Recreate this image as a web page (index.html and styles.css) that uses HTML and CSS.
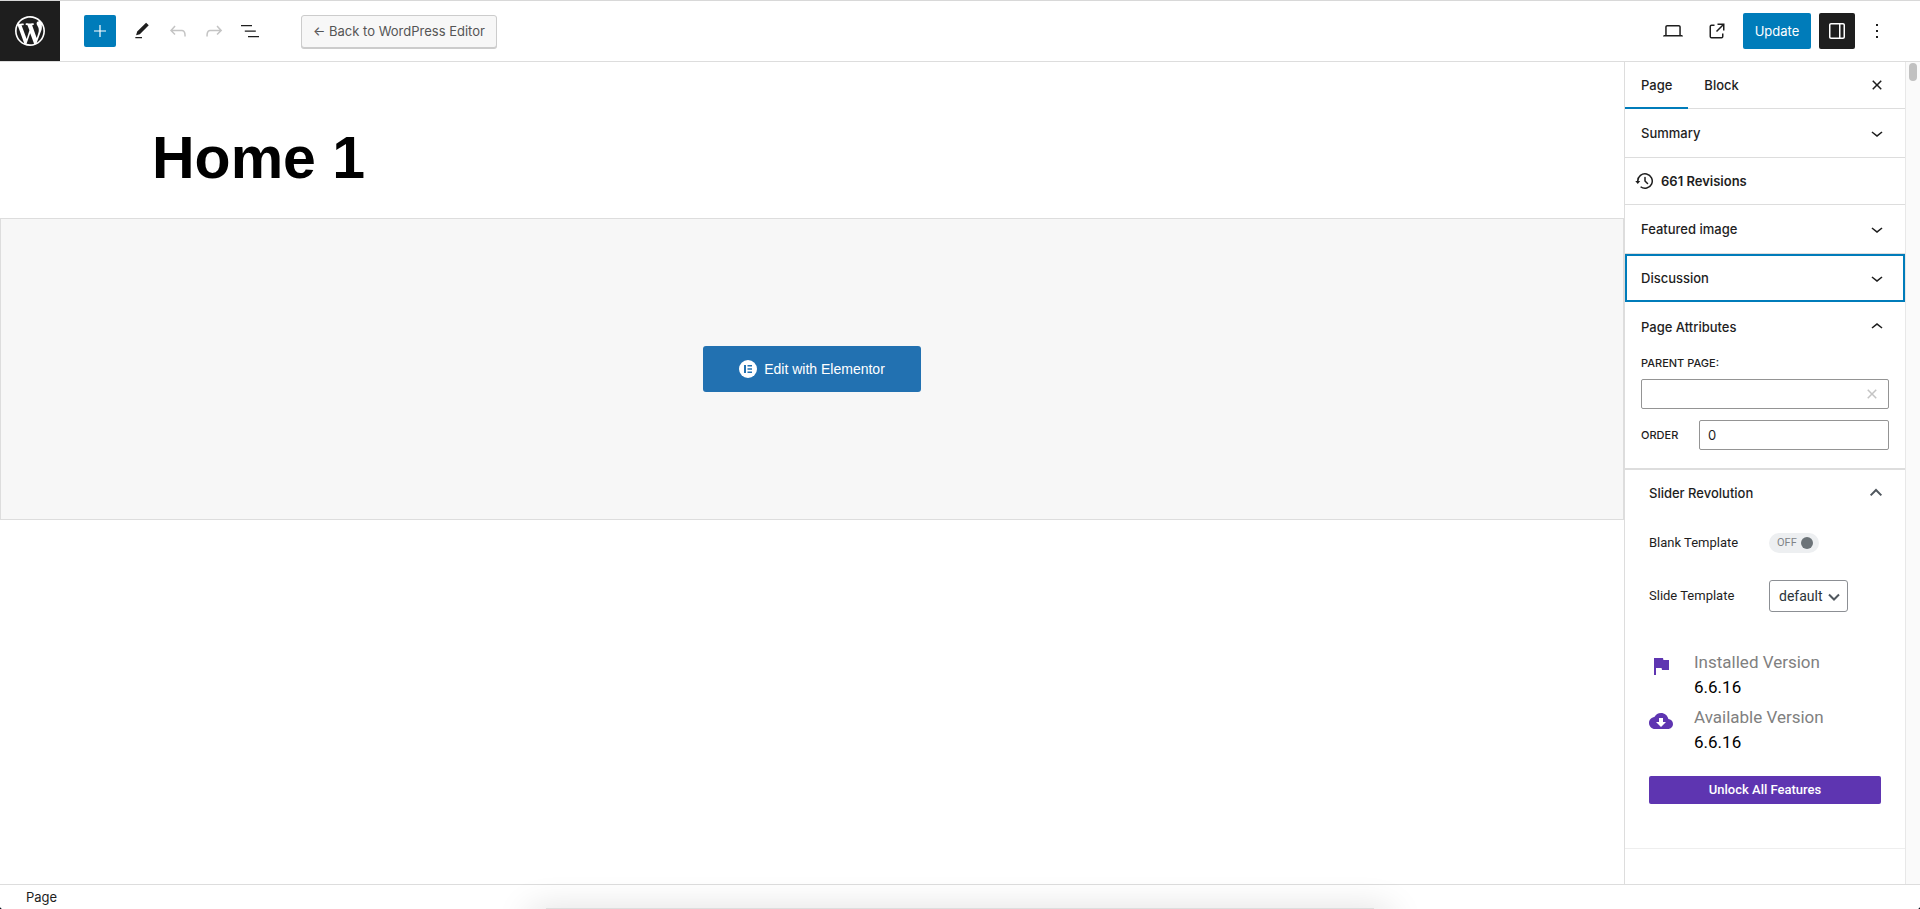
FILE: index.html
```html
<!DOCTYPE html>
<html lang="en">
<head>
<meta charset="utf-8">
<title>Edit Page "Home 1"</title>
<link rel="stylesheet" href="styles.css">
</head>
<body>
<div class="editor">
  <header class="header">
    <a class="wp-link" href="#" aria-label="View Pages"><svg class="wp-logo" viewBox="-2 -2 24 24"><path d="M20 10c0-5.51-4.49-10-10-10C4.48 0 0 4.49 0 10c0 5.52 4.48 10 10 10 5.51 0 10-4.48 10-10zM7.78 15.37L4.37 6.22c.55-.02 1.17-.08 1.17-.08.5-.06.44-1.13-.06-1.11 0 0-1.45.11-2.37.11-.18 0-.37 0-.58-.01C4.12 2.69 6.87 1.11 10 1.11c2.33 0 4.45.87 6.05 2.34-.68-.11-1.65.39-1.65 1.58 0 .74.45 1.36.9 2.1.35.61.55 1.36.55 2.46 0 1.49-1.4 5-1.4 5l-3.03-8.37c.54-.02.82-.17.82-.17.5-.05.44-1.25-.06-1.22 0 0-1.44.12-2.38.12-.87 0-2.33-.12-2.33-.12-.5-.03-.56 1.2-.06 1.22l.92.08 1.26 3.41zM17.41 10c.24-.64.74-1.87.43-4.25.7 1.29 1.05 2.71 1.05 4.25 0 3.29-1.73 6.24-4.4 7.78.97-2.59 1.94-5.2 2.92-7.78zM6.1 18.09C3.12 16.65 1.11 13.53 1.11 10c0-1.3.23-2.48.72-3.59C3.25 10.3 4.67 14.2 6.1 18.09zm4.03-6.63l2.58 6.98c-.86.29-1.76.45-2.71.45-.79 0-1.57-.11-2.29-.33.81-2.38 1.62-4.74 2.42-7.1z"/></svg></a>
    <div class="tools">
      <button class="inserter" aria-label="Toggle block inserter"><svg class="icon" viewBox="0 0 24 24"><path d="M11.4 12.6V18h1.200v-5.400H18v-1.200h-5.400V6h-1.200v5.400H6v1.200z"/></svg></button>
      <button class="tool" aria-label="Tools"><svg class="icon-small" viewBox="0 0 24 24"><path d="M20.1 5.1L16.9 2 6.2 12.7l-1.3 4.4 4.5-1.3L20.1 5.1zM4 20.8h8v-1.5H4v1.5z"/></svg></button>
      <button class="tool" aria-label="Undo" disabled><svg class="icon" viewBox="0 0 24 24"><path d="M18.3 11.7c-.6-.6-1.4-.9-2.3-.9H6.7l2.9-3.3-1.1-1-4.5 5L8.5 16l1-1-2.7-2.7H16c.5 0 .9.2 1.3.5 1 1 1 3.4 1 4.5v.3h1.5v-.2c0-1.5 0-4.3-1.5-5.7z"/></svg></button>
      <button class="tool" aria-label="Redo" disabled><svg class="icon" viewBox="0 0 24 24"><path d="M15.6 6.5l-1.1 1 2.9 3.3H8c-.9 0-1.7.3-2.3.9-1.4 1.5-1.4 4.2-1.4 5.6v.2h1.5v-.3c0-1.1 0-3.5 1-4.5.3-.3.7-.5 1.3-.5h9.2L14.5 15l1.1 1.1 4.6-4.6-4.6-5z"/></svg></button>
      <button class="tool" aria-label="Document overview"><svg class="icon" viewBox="0 0 24 24"><path d="M3 6h11v1.3H3V6Zm3.8 5.5h11v1.3h-11v-1.3ZM21 17H10v1.3h11V17Z"/></svg></button>
    </div>
    <button class="back">← Back to WordPress Editor</button>
    <div class="settings">
      <button class="tool" aria-label="Preview"><svg class="icon" viewBox="0 0 24 24"><path d="M20.5 16h-.7V8c0-1.1-.9-2-2-2H6.2c-1.1 0-2 .9-2 2v8h-.7c-.8 0-1.5.7-1.5 1.5h20c0-.8-.7-1.5-1.5-1.5zM5.7 8c0-.3.2-.5.5-.5h11.6c.3 0 .5.2.5.5v8H5.7V8z"/></svg></button>
      <a class="tool" href="#" aria-label="View Page"><svg class="icon" viewBox="0 0 24 24"><path d="M19.5 4.5h-7V6h4.44l-5.97 5.97 1.06 1.06L18 7.06v4.44h1.5v-7Zm-13 1a2 2 0 0 0-2 2v10a2 2 0 0 0 2 2h10a2 2 0 0 0 2-2v-3H17v3a.5.5 0 0 1-.5.5h-10a.5.5 0 0 1-.5-.5v-10a.5.5 0 0 1 .5-.5h3V5.5h-3Z"/></svg></a>
      <button class="update">Update</button>
      <button class="tool tool-pressed" aria-label="Settings" aria-pressed="true"><svg class="icon" viewBox="0 0 24 24"><path d="M18 4H6c-1.1 0-2 .9-2 2v12c0 1.1.9 2 2 2h12c1.1 0 2-.9 2-2V6c0-1.1-.9-2-2-2zm-4 14.500H6c-.3 0-.5-.2-.5-.5V6c0-.3.2-.5.5-.5h8v13zm4.500-.5c0 .3-.2.5-.5.5h-2.500v-13H18c.3 0 .5.2.5.5v12z"/></svg></button>
      <button class="tool" aria-label="Options"><svg class="icon" viewBox="0 0 24 24"><path d="M13 19h-2v-2h2v2zm0-6h-2v-2h2v2zm0-6h-2V5h2v2z"/></svg></button>
    </div>
  </header>

  <div class="body">
    <main class="canvas">
      <h1 class="title">Home 1</h1>
      <div class="placeholder">
        <button class="elementor"><svg class="elementor-icon" viewBox="0 0 18 18"><circle cx="9" cy="9" r="9" fill="#fff"/><path fill="#2271b1" d="M5 5h2v8H5zM8.500 5H13v1.600H8.500zM8.500 8.200H13v1.600H8.500zM8.500 11.400H13V13H8.500z"/></svg>Edit with Elementor</button>
      </div>
    </main>

    <aside class="sidebar">
      <div class="panels">
        <div class="tabs">
          <button class="tab tab-active">Page</button>
          <button class="tab">Block</button>
          <button class="close" aria-label="Close settings"><svg class="icon" viewBox="0 0 24 24"><path d="M12 13.060l3.712 3.713 1.061-1.060L13.061 12l3.712-3.712-1.060-1.060L12 10.938 8.288 7.227l-1.061 1.060L10.939 12l-3.712 3.712 1.060 1.061L12 13.061z"/></svg></button>
        </div>
        <button class="panel-toggle">Summary<svg class="icon" viewBox="0 0 24 24"><path d="M17.500 11.600L12 16l-5.500-4.400.9-1.200L12 14l4.500-3.600 1 1.200z"/></svg></button>
        <a class="revisions" href="#"><svg class="icon" viewBox="0 0 24 24"><path d="M5.500 12h1.750l-2.500 3-2.500-3H4a8 8 0 113.134 6.350l.907-1.194A6.500 6.500 0 105.500 12zm9.530 1.970l-2.280-2.280V8.500a.75.75 0 00-1.500 0V12a.747.747 0 00.218.529l2.502 2.502a.75.75 0 101.060-1.061z"/></svg>661 Revisions</a>
        <button class="panel-toggle">Featured image<svg class="icon" viewBox="0 0 24 24"><path d="M17.500 11.600L12 16l-5.500-4.400.9-1.200L12 14l4.500-3.600 1 1.200z"/></svg></button>
        <button class="panel-toggle panel-focus">Discussion<svg class="icon" viewBox="0 0 24 24"><path d="M17.500 11.600L12 16l-5.500-4.400.9-1.200L12 14l4.500-3.600 1 1.200z"/></svg></button>
        <section class="attributes">
          <button class="panel-toggle panel-open">Page Attributes<svg class="icon" viewBox="0 0 24 24"><path d="M6.500 12.400L12 8l5.500 4.400-.9 1.200L12 10l-4.500 3.600-1-1.200z"/></svg></button>
          <div class="fields">
            <label class="field-label" for="parent">PARENT PAGE:</label>
            <div class="combo">
              <input class="combo-input" id="parent" type="text">
              <button class="combo-clear" aria-label="Reset"><svg class="icon" viewBox="0 0 24 24"><path d="M12 13.060l3.712 3.713 1.061-1.060L13.061 12l3.712-3.712-1.060-1.060L12 10.938 8.288 7.227l-1.061 1.060L10.939 12l-3.712 3.712 1.060 1.061L12 13.061z"/></svg></button>
            </div>
            <div class="order">
              <label class="field-label" for="order">ORDER</label>
              <input class="order-input" id="order" type="text" value="0">
            </div>
          </div>
        </section>

        <section class="slider-panel">
          <button class="slider-toggle">Slider Revolution<svg class="slider-chevron" viewBox="0 0 24 24"><path d="M4 15.500l8-8 8 8"/></svg></button>
          <div class="setting">
            <label class="setting-label" for="blank">Blank Template</label>
            <span class="switch"><input class="switch-input" id="blank" type="checkbox"><span class="switch-text">OFF</span><span class="switch-knob"></span></span>
          </div>
          <div class="setting setting-tall">
            <label class="setting-label" for="slide">Slide Template</label>
            <span class="select-wrap"><select class="select" id="slide"><option>default</option></select><svg class="select-arrow" viewBox="0 0 12 8"><path d="M1 1.500l5 5 5-5"/></svg></span>
          </div>
          <div class="version">
            <svg class="version-icon" viewBox="0 0 24 24"><path d="M14.400 6L14 4H5v17h2v-7h5.600l.4 2h7V6z"/></svg>
            <div><div class="version-name">Installed Version</div><div class="version-number">6.6.16</div></div>
          </div>
          <div class="version">
            <svg class="version-icon" viewBox="0 0 24 24"><path d="M19.350 10.040C18.670 6.590 15.640 4 12 4 9.110 4 6.600 5.640 5.350 8.040 2.340 8.360 0 10.910 0 14c0 3.310 2.690 6 6 6h13c2.760 0 5-2.240 5-5 0-2.640-2.050-4.780-4.650-4.960zM17 13l-5 5-5-5h3V9h4v4h3z"/></svg>
            <div><div class="version-name">Available Version</div><div class="version-number">6.6.16</div></div>
          </div>
          <button class="unlock">Unlock All Features</button>
        </section>
      </div>
      <div class="scrollbar"><div class="scroll-thumb"></div></div>
    </aside>
  </div>

  <footer class="footer">Page</footer>
</div>
<div class="dock-shadow"></div>
<div class="corner corner-left"></div>
<div class="corner corner-right"></div>
</body>
</html>
```

FILE: styles.css
```css
* { box-sizing: border-box; }

body {
  margin: 0;
  overflow: hidden;
  background: #fff;
  color: #1e1e1e;
  font: 13px/20px Inter, "Liberation Sans", sans-serif;
}

button, input, select {
  margin: 0;
  padding: 0;
  border: 0;
  background: none;
  color: inherit;
  font: inherit;
}

a { color: inherit; text-decoration: none; }
svg { display: block; flex: none; fill: currentColor; }

.icon { width: 24px; height: 24px; }
.icon-small { width: 20px; height: 20px; }

.editor {
  display: flex;
  flex-direction: column;
  height: 100vh;
  border-top: 1px solid #d8d8d8;
}

/* Header */
.header {
  display: flex;
  align-items: center;
  flex: none;
  height: 61px;
  border-bottom: 1px solid #ddd;
}
.wp-link {
  display: flex;
  align-items: center;
  justify-content: center;
  width: 60px;
  height: 60px;
  background: #1e1e1e;
  color: #fff;
}
.wp-logo { width: 36px; height: 36px; }
.tools { display: flex; align-items: center; padding-left: 24px; }
.inserter {
  display: flex;
  align-items: center;
  justify-content: center;
  width: 32px;
  height: 32px;
  margin-right: 8px;
  border-radius: 2px;
  background: #007cba;
  color: #fff;
}
.tool {
  display: flex;
  align-items: center;
  justify-content: center;
  width: 36px;
  height: 36px;
  border-radius: 2px;
}
.tool:disabled { color: #c4c4c4; }
.tool-pressed { margin: 0 4px 0 8px; background: #1e1e1e; color: #fff; }
.back {
  height: 33px;
  margin-left: 33px;
  padding: 0 11px;
  border: 1px solid #ccc;
  border-radius: 3px;
  background: #f7f7f7;
  box-shadow: 0 1px 0 #ccc;
  color: #555;
}
.settings {
  display: flex;
  align-items: center;
  margin-left: auto;
  padding-right: 25px;
}
.settings a.tool { margin: 0 8px; }
.update {
  width: 68px;
  height: 36px;
  border-radius: 2px;
  background: #007cba;
  color: #fff;
}

/* Canvas */
.body { display: flex; flex: 1; min-height: 0; }
.canvas { flex: 1; min-width: 0; }
.title {
  margin: 0;
  padding: 60px 152px 24px;
  color: #000;
  font: bold 59px/72px "Liberation Sans", Arial, sans-serif;
}
.placeholder {
  display: flex;
  align-items: center;
  justify-content: center;
  height: 302px;
  border: 1px solid #ddd;
  background: #f7f7f7;
}
.elementor {
  display: flex;
  align-items: center;
  gap: 7px;
  height: 46px;
  padding: 0 36px;
  border-radius: 3px;
  background: #2271b1;
  color: #fff;
  font: 14px/20px "Liberation Sans", Arial, sans-serif;
}
.elementor-icon { width: 18px; height: 18px; }

/* Sidebar */
.sidebar {
  display: flex;
  flex: none;
  width: 296px;
  border-left: 1px solid #ddd;
}
.panels { flex: 1; overflow: hidden; }
.scrollbar {
  width: 15px;
  padding: 1px 3px;
  border-left: 1px solid #e8e8e8;
  background: #fafafa;
}
.scroll-thumb { height: 18px; border-radius: 4px; background: #c1c1c1; }

.tabs { display: flex; height: 47px; border-bottom: 1px solid #ddd; }
.tab {
  height: 47px;
  padding: 0 16px;
  border-bottom: 2px solid transparent;
  font-weight: 500;
}
.tab-active { border-bottom-color: #007cba; }
.close { margin: 0 16px 0 auto; }
.panel-toggle {
  display: flex;
  align-items: center;
  justify-content: space-between;
  width: 100%;
  height: 49px;
  padding: 0 16px;
  border-bottom: 1px solid #ddd;
  font-weight: 500;
}
.revisions {
  display: flex;
  align-items: center;
  gap: 4px;
  height: 47px;
  padding-left: 8px;
  border-bottom: 1px solid #ddd;
  font-weight: 600;
}
.panel-focus { height: 48px; border: 0; box-shadow: inset 0 0 0 2px #007cba; }
.panel-open { border: 0; }

.attributes { padding-bottom: 18px; border-bottom: 2px solid #ddd; }
.fields { padding: 4px 16px 0; }
.field-label { display: block; font-size: 11px; line-height: 16px; font-weight: 500; }
.combo {
  display: flex;
  align-items: center;
  height: 30px;
  margin-top: 8px;
  padding-right: 4px;
  border: 1px solid #949494;
  border-radius: 2px;
}
.combo-input { flex: 1; min-width: 0; height: 28px; padding: 0 8px; }
.combo-clear { color: #c4c4c4; }
.order { display: flex; align-items: center; justify-content: space-between; margin-top: 11px; }
.order-input {
  width: 190px;
  height: 30px;
  padding: 0 8px;
  border: 1px solid #949494;
  border-radius: 2px;
}

.slider-panel {
  height: 379px;
  padding: 0 24px;
  border-bottom: 1px solid #eee;
  font-family: Roboto, sans-serif;
}
.slider-toggle {
  display: flex;
  align-items: center;
  justify-content: space-between;
  width: 100%;
  height: 46px;
  font: 500 13px/20px Inter, sans-serif;
}
.slider-chevron { width: 16px; height: 16px; margin-right: -3px; }
.slider-chevron path { fill: none; stroke: #50575e; stroke-width: 3; }
.setting { display: flex; align-items: center; height: 53px; }
.setting-label { width: 120px; }
.switch {
  position: relative;
  display: flex;
  align-items: center;
  justify-content: space-between;
  width: 50px;
  height: 20px;
  padding: 0 6px 0 8px;
  border-radius: 10px;
  background: #edeff1;
  color: #808488;
  font-size: 11px;
}
.switch-input { position: absolute; inset: 0; opacity: 0; }
.switch-knob { width: 12px; height: 12px; border-radius: 50%; background: #6c7378; }
.select-wrap { position: relative; }
.select {
  appearance: none;
  width: 79px;
  height: 32px;
  padding-left: 9px;
  border: 1px solid #8c8f94;
  border-radius: 3px;
  color: #2c3338;
  font-size: 14px;
}
.select-arrow { position: absolute; right: 8px; top: 13px; width: 12px; height: 8px; pointer-events: none; }
.select-arrow path { fill: none; stroke: #50575e; stroke-width: 2; }
.version { display: flex; gap: 21px; height: 55px; }
.setting-tall + .version { margin-top: 28px; }
.version-icon { width: 24px; height: 24px; margin-top: 4px; color: #5e35b1; }
.version-name, .version-number { font-size: 17px; line-height: 25px; }
.version-name { color: #808080; }
.version-number { color: #000; }
.unlock {
  display: block;
  width: 100%;
  height: 28px;
  margin-top: 16px;
  border-radius: 2px;
  background: #5e35b1;
  color: #fff;
  font-weight: 500;
}

.footer {
  flex: none;
  height: 25px;
  padding: 2px 26px;
  border-top: 1px solid #ddd;
  line-height: 20px;
}

/* Dock edge and rounded window corners over the bottom of the window */
.dock-shadow {
  position: fixed;
  left: 546px;
  right: 546px;
  bottom: 0;
  height: 1px;
  background: #ddd;
  box-shadow: 0 18px 36px 16px rgba(0, 0, 0, .14);
  pointer-events: none;
}
.corner { position: fixed; bottom: 0; width: 4px; height: 4px; }
.corner-left { left: 0; background: radial-gradient(circle at 100% 0, transparent 4px, #000b18 5px); }
.corner-right { right: 0; background: radial-gradient(circle at 0 0, transparent 4px, #000b18 5px); }
```
